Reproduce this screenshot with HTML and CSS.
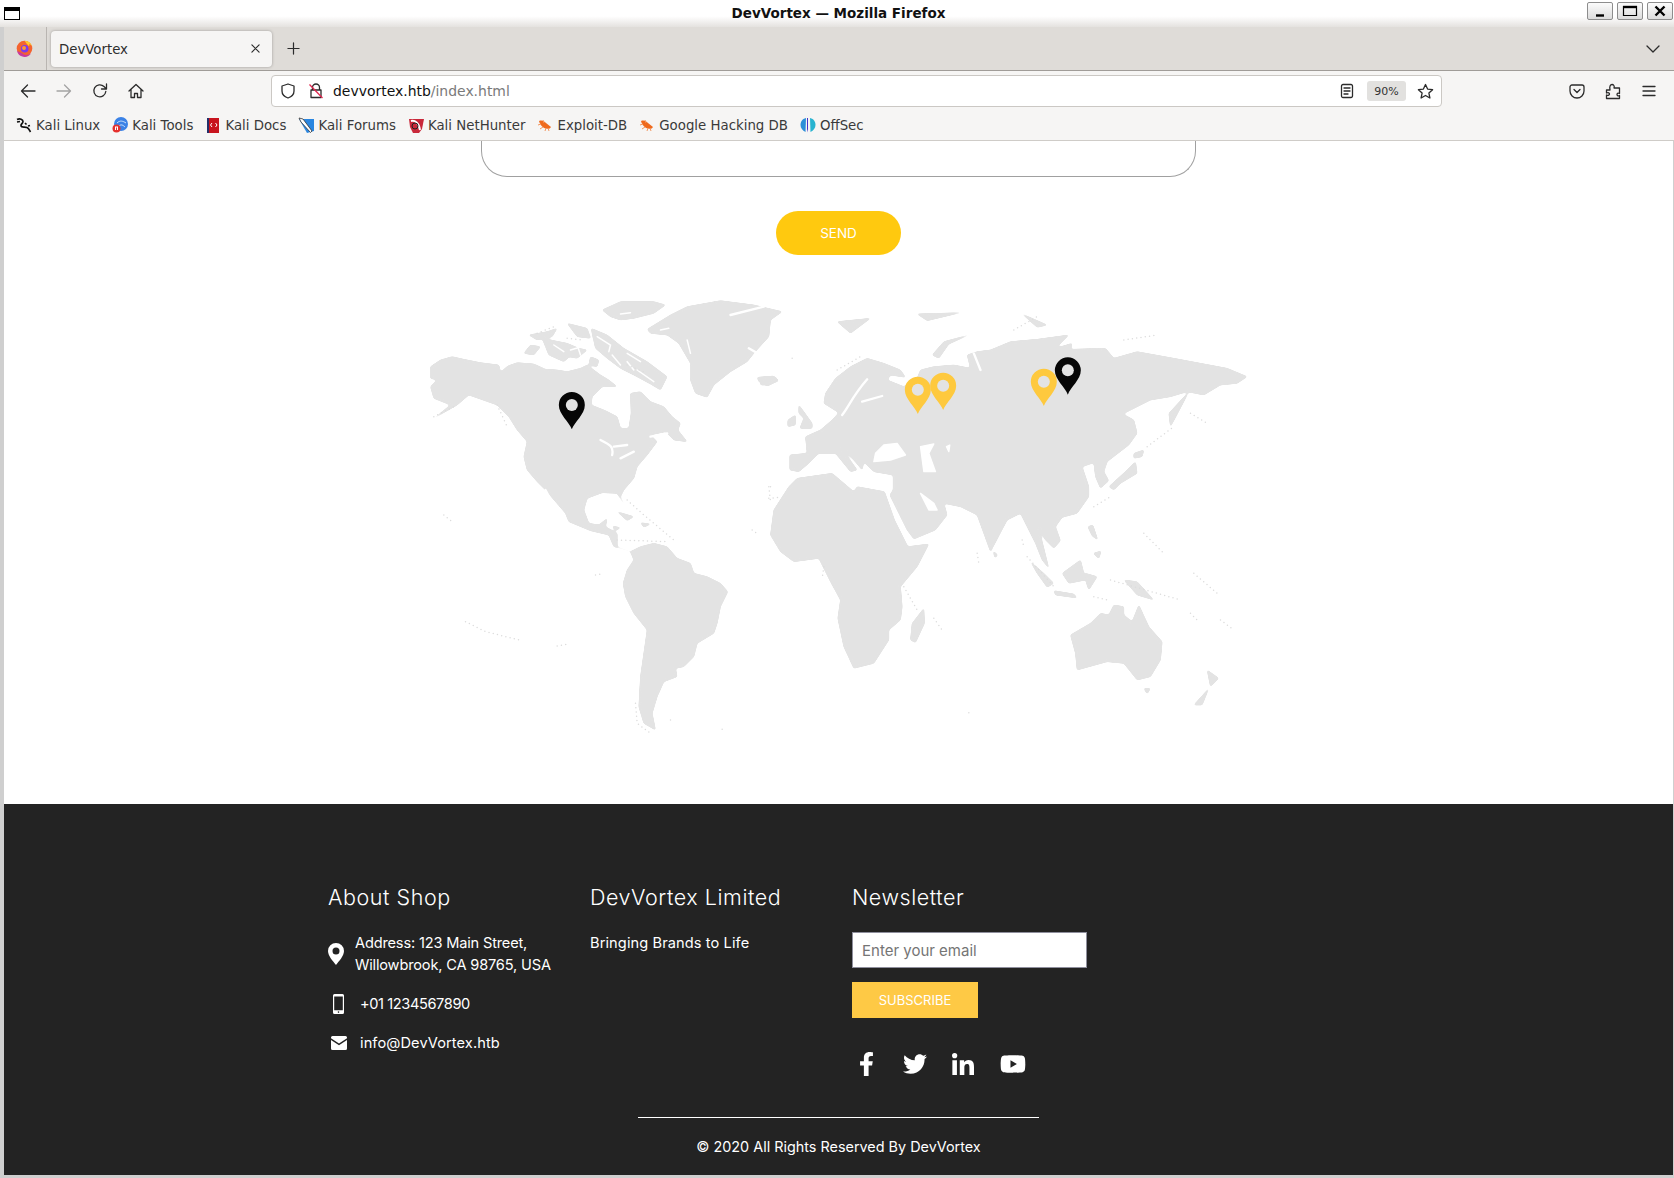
FILE: index.html
```html
<!DOCTYPE html>
<html lang="en">
<head>
<meta charset="utf-8">
<title>DevVortex</title>
<link rel="stylesheet" href="styles.css">
</head>
<body>
<div class="window">
  <header class="titlebar">
    <span class="win-icon"></span>
    <span class="win-title">DevVortex — Mozilla Firefox</span>
    <div class="win-buttons">
      <span class="win-btn"><svg width="14" height="12" viewBox="0 0 14 12"><path d="M3 10.500h8" class="wb"/></svg></span>
      <span class="win-btn"><svg width="16" height="12" viewBox="0 0 16 12"><path d="M1.500 1.500h13v9h-13z" class="wbt"/><path d="M1 2h14" class="wb"/></svg></span>
      <span class="win-btn"><svg width="14" height="12" viewBox="0 0 14 12"><path d="M2.500 1.500l9 9M11.500 1.500l-9 9" class="wb"/></svg></span>
    </div>
  </header>

  <div class="tabbar">
    <div class="ff-cell">
      <svg width="17" height="17" viewBox="0 0 17 17"><circle cx="8.500" cy="8.500" r="7.800" fill="#f4632f"/><path d="M8.500 .7a7.800 7.800 0 0 1 7.600 6c-1-1.700-2-2.500-3-3 .6 1 .4 2-.4 2.200C11.500 4.500 10 3 8.500.7z" fill="#ffcb2e"/><path d="M1 11a7.800 7.800 0 0 0 14 2.500c-3 2-7 2-9-.500z" fill="#c93a9c"/><circle cx="8.700" cy="8.700" r="3.800" fill="#7c3aed"/><circle cx="8" cy="8" r="2" fill="#ff9a2e"/></svg>
    </div>
    <div class="tab">
      <span class="tab-title">DevVortex</span>
      <svg class="tab-close" width="9" height="9" viewBox="0 0 10 10"><path d="M1 1l8 8M9 1l-8 8" class="ic"/></svg>
    </div>
    <svg class="new-tab" width="13" height="13" viewBox="0 0 14 14"><path d="M7 1v12M1 7h12" class="ic"/></svg>
    <svg class="tab-list" width="14" height="8" viewBox="0 0 14 8"><path d="M1 1l6 6 6-6" class="ic"/></svg>
  </div>

  <nav class="toolbar">
    <span class="tool"><svg width="16" height="16" viewBox="0 0 16 16"><path d="M15 8H1.500M7.500 2l-6 6 6 6" class="ic"/></svg></span>
    <span class="tool dim"><svg width="16" height="16" viewBox="0 0 16 16"><path d="M1 8h13.500M8.500 2l6 6-6 6" class="ic"/></svg></span>
    <span class="tool"><svg width="16" height="16" viewBox="0 0 16 16"><path d="M13.800 8.500A6 6 0 1 1 12 3.500L14.500 6M14.500 1v5h-5" class="ic"/></svg></span>
    <span class="tool"><svg width="16" height="16" viewBox="0 0 16 16"><path d="M1 8l7-6.500L15 8M3 6.500V14.500h3.500v-4h3v4H13V6.500" class="ic"/></svg></span>
    <div class="urlbar">
      <svg class="shield" width="16" height="16" viewBox="0 0 16 16"><path d="M8 1l6 2v5c0 3.500-3 6-6 7-3-1-6-3.500-6-7V3z" class="ic"/></svg>
      <svg class="lock" width="16" height="16" viewBox="0 0 16 16"><path d="M4.500 7V4.500a3.500 3.500 0 0 1 7 0V7M3 7h10v7.500H3z" class="ic"/><path d="M1.500 1.500l13 13.500" stroke="#e22850" stroke-width="1.300" fill="none"/></svg>
      <span class="url"><span class="url-host">devvortex.htb</span>/index.html</span>
      <svg class="reader" width="14" height="16" viewBox="0 0 14 16"><path d="M3 1.500h8A1.500 1.500 0 0 1 12.500 3v10a1.500 1.500 0 0 1-1.500 1.500H3A1.500 1.500 0 0 1 1.500 13V3A1.500 1.500 0 0 1 3 1.500zM4 5h6M4 8h6M4 11h4" class="ic"/></svg>
      <span class="zoom-badge">90%</span>
      <svg class="star" width="17" height="17" viewBox="0 0 17 17"><path d="M8.500 1.500l2.100 4.600 5 .6-3.700 3.400 1 4.900-4.400-2.500L4.100 15l1-4.900L1.400 6.700l5-.6z" class="ic"/></svg>
    </div>
    <div class="tools-right">
      <span class="tool"><svg width="16" height="16" viewBox="0 0 16 16"><path d="M3 2h10a2 2 0 0 1 2 2v4a7 7 0 0 1-14 0V4a2 2 0 0 1 2-2zM5 6.500l3 3 3-3" class="ic"/></svg></span>
      <span class="tool"><svg width="16" height="17" viewBox="0 0 16 17"><path d="M1.500 7h3.500c-.8-4 .5-5.500 2-5.500S9.800 3 9 5h5.500v5.500c-1.800-.8-2.500 0-2.500 1s.8 1.800 2.500 1V15.500H1.500v-3.500c2 .8 3 0 3-1s-1-1.800-3-1z" class="ic"/></svg></span>
      <span class="tool"><svg width="14" height="12" viewBox="0 0 14 12"><path d="M1 1.500h12M1 6h12M1 10.500h12" class="ic"/></svg></span>
    </div>
  </nav>

  <div class="bookmarks">
    <a class="bm"><svg width="16" height="16" viewBox="0 0 16 16"><path d="M1 2.500C4 1 7 2.500 7 4.500 7 6.500 4.500 7 5 9c.5 2 4 .5 6 1.500 2 1 2.500 3 3.500 4.500M1 5l3-.5M9 6l1.500 1.500M12 9l2-.5" fill="none" stroke="#111" stroke-width="1.700"/></svg>Kali Linux</a>
    <a class="bm"><svg width="16" height="16" viewBox="0 0 16 16"><circle cx="9" cy="7" r="7" fill="#3b82e6"/><path d="M5 6c3-3 6-2 9 0M7 9c2-2 4-1 6 1" stroke="#cfe3fb" fill="none"/><circle cx="4.500" cy="11.500" r="4" fill="#e5302d"/><path d="M3 10h3M3.500 10v3M5.500 10v3" stroke="#fff"/></svg>Kali Tools</a>
    <a class="bm"><svg width="16" height="16" viewBox="0 0 16 16"><path d="M2 1h12v15H2z" fill="#c8141e"/><path d="M2 1h2v15H2z" fill="#24306a"/><path d="M7 6L5.500 8 7 10M10.500 6L12 8l-1.500 2" stroke="#fff" fill="none"/></svg>Kali Docs</a>
    <a class="bm"><svg width="16" height="16" viewBox="0 0 16 16"><path d="M1 2h15v12L9 16z" fill="#2a86e0"/><path d="M1 1l4 1 9 12-1.500 1.500L3 5z" fill="#fff" stroke="#333" stroke-width=".8"/></svg>Kali Forums</a>
    <a class="bm"><svg width="16" height="16" viewBox="0 0 16 16"><path d="M1 2h15l-2 10-3 4H5L2 10z" fill="#c9283a"/><path d="M3 4c4-1 8 2 9 9" stroke="#fff" stroke-width="2" fill="none"/><circle cx="7" cy="9" r="3" fill="none" stroke="#222"/></svg>Kali NetHunter</a>
    <a class="bm"><svg width="16" height="16" viewBox="0 0 16 16"><path d="M2 4c3-1 5 0 7 2l5 4c-1 2-3 2-5 1.500C6 11 3 8 2 4z" fill="#ef6a1d"/><path d="M1 8l3-1M3 12l3-2M8 14l1-3M12 14l-1-3M6 3l1 3" stroke="#f3975f" fill="none"/></svg>Exploit-DB</a>
    <a class="bm"><svg width="16" height="16" viewBox="0 0 16 16"><path d="M2 4c3-1 5 0 7 2l5 4c-1 2-3 2-5 1.500C6 11 3 8 2 4z" fill="#ef6a1d"/><path d="M1 8l3-1M3 12l3-2M8 14l1-3M12 14l-1-3M6 3l1 3" stroke="#f3975f" fill="none"/></svg>Google Hacking DB</a>
    <a class="bm"><svg width="16" height="16" viewBox="0 0 16 16"><path d="M6 1C2 2 .5 5 .5 8s2 5.500 5 7z" fill="#2d8fd8"/><path d="M10 1c4 1 5.500 4 5.500 7s-2 5.500-5 7z" fill="#27b3d0"/><path d="M8 1v11l-.7 3.500L7 12V1z" fill="#4a32c8"/></svg>OffSec</a>
  </div>

  <div class="page">
    <main class="content">
      <div class="textarea-tail"></div>
      <button class="send">SEND</button>
      <svg class="map" width="840" height="460" viewBox="418.500 285 840 460" role="img" aria-label="World map">
        <defs>
          <filter id="soft" x="-5%" y="-5%" width="110%" height="110%"><feGaussianBlur stdDeviation="3.500"/><feComponentTransfer><feFuncA type="linear" slope="5" intercept="-2"/></feComponentTransfer></filter>
          <g id="pin"><path d="M0 0C-8-22-39-45-39-73A39 39 0 0 1 39-73C39-45 8-22 0 0Z"/><circle cx="0" cy="-73" r="18" fill="#e3e3e3"/></g>
        </defs>
        <g transform="translate(420 290) scale(.33333)">
          <g class="land" filter="url(#soft)">
            <path d="M30 230L60 210 95 200 130 208 180 218 235 225 240 247 262 228 290 218 340 222 375 238 410 240 440 245 480 235 500 225 540 255 565 270 590 290 545 290 515 320 512 345 555 362 590 380 600 415 625 415 632 370 630 310 660 305 690 335 730 350 755 380 780 400 772 420 800 455 760 450 735 425 690 435 710 455 680 495 650 530 640 565 610 600 600 620 612 645 590 610 545 608 500 625 490 660 505 700 535 705 560 685 555 710 590 730 590 770 630 785 600 775 580 770 565 735 510 722 445 695 435 670 375 600 350 575 320 540 310 500 320 455 290 420 265 380 230 345 145 315 110 345 40 385 90 345 40 325 30 290 50 270 30 265Z"/>
            <path d="M630 785L660 770 700 760 740 770 770 805 810 820 820 850 860 860 900 880 922 905 900 950 890 1000 880 1030 830 1060 820 1100 790 1130 765 1135 770 1160 730 1175 710 1220 695 1270 705 1320 670 1300 655 1250 660 1160 680 1020 640 970 615 920 608 880 620 840 640 810Z"/>
            <path d="M680 118L750 75 800 50 900 32 1000 45 1085 65 1050 90 1045 140 1000 190 980 215 930 245 880 285 860 322 825 310 810 270 810 220 775 160 740 135 690 130Z"/>
            <path d="M545 60L600 35 700 35 735 45 700 70 640 85 600 90 570 80Z"/>
            <path d="M1010 262L1060 258 1075 272 1040 288 1015 275Z"/>
            <path d="M310 190L330 165 360 170 340 195Z"/>
            <path d="M325 135L380 125 410 115 395 140 350 150Z"/>
            <path d="M365 145L440 160 475 175 430 215 385 195Z"/>
            <path d="M450 170L500 180 470 205 445 200Z"/>
            <path d="M512 115L560 135 610 175 680 215 740 260 720 300 690 282 640 255 600 235 560 205 525 175Z"/>
            <path d="M440 100L500 115 510 145 470 140Z"/>
            <path d="M510 200L535 210 530 230 505 225Z"/>
            <path d="M590 665L640 680 620 692Z"/>
            <path d="M660 698L690 702 670 712Z"/>
            <path d="M575 708L600 713 585 722Z"/>
          </g>
          <path class="cut" d="M375 600L410 665M540 450C570 465 580 470 575 495M600 505L640 485M580 470L620 465M690 440L740 430M930 75L1030 50M985 175L1020 195"/>
          <path class="cut thin" d="M600 72L630 68M555 105L610 120M450 180L500 165M530 140L570 165 565 185M575 195L600 225M620 190L660 215M650 240L700 275M620 215L640 240M400 165L430 185M470 165L480 195M720 120L745 115M800 150L810 190"/>
          <path class="dots" d="M40 380L100 350M230 345L260 410M70 675L95 695M135 995L195 1025 305 1052M410 1068L445 1062M525 855L550 850M620 630L670 675 760 750M590 750L740 755M1045 625L1075 622M995 720L1015 735M1050 590L1055 600M645 1240L650 1300 690 1330M750 1290L760 1295M905 1318L915 1320M1115 205L1125 210M350 130L400 110M440 145L490 150M620 225L680 250"/>
        </g>
        <g transform="translate(760 290) scale(.33333)">
          <g class="land" filter="url(#soft)">
            <path d="M30 735L40 660 85 590 110 565 215 550 280 605 290 590 372 605 402 690 442 770 505 762 470 830 420 890 425 950 420 990 385 1020 385 1050 340 1120 280 1135 250 1070 232 985 240 930 210 875 175 805 100 815 60 785Z"/>
            <path d="M88 495L140 490 135 440 180 420 215 390 235 368 190 340 195 310 225 265 270 230 320 205 370 220 420 240 435 262 390 255 380 270 430 290 470 265 480 240 520 230 580 225 630 235 620 195 650 185 690 180 750 155 830 148 925 135 885 175 935 160 930 178 1035 175 1060 205 1130 185 1240 205 1320 220 1400 235 1460 260 1430 280 1380 285 1330 315 1280 305 1230 320 1170 330 1087 372 1120 390 1130 430 1105 465 1040 515 1030 545 1045 572 1020 595 1005 560 1000 518 965 530 985 590 985 620 950 670 905 682 885 710 900 752 880 775 855 750 835 715 865 835 845 810 825 760 805 720 780 670 740 690 690 785 650 675 600 650 550 640 560 675 525 720 460 747 440 720 388 615 398 600 398 555 340 545 310 515 305 540 280 510 240 470 290 540 270 545 225 490 175 490 145 520 115 545 88 540Z"/>
            <path d="M490 955L492 1000 465 1058 450 1050 455 1000Z"/>
            <path d="M1045 590L1100 540 1125 515 1130 550 1080 580 1060 600Z"/>
            <path d="M1120 490L1150 480 1145 500 1120 505Z"/>
            <path d="M1230 410L1225 370 1285 305 1262 350Z"/>
            <path d="M905 850L960 810 975 870 925 880Z"/>
            <path d="M810 815L850 850 880 880 860 892 830 850Z"/>
            <path d="M880 902L940 912 950 924 885 915Z"/>
            <path d="M1090 870L1130 875 1180 930 1130 915Z"/>
            <path d="M982 710L997 705 1012 750 995 738Z"/>
            <path d="M998 790L1022 783 1015 806Z"/>
            <path d="M975 850L1010 860 985 900 978 880Z"/>
            <path d="M930 1035L990 1000 1020 970 1045 975 1060 945 1090 950 1090 975 1115 995 1135 945 1165 1010 1205 1055 1200 1110 1170 1160 1130 1170 1090 1120 1040 1115 950 1140 945 1090Z"/>
            <path d="M1150 1195L1170 1195 1160 1212Z"/>
            <path d="M1340 1140L1375 1165 1350 1190Z"/>
            <path d="M1345 1195L1300 1245 1325 1245Z"/>
            <path d="M698 783L712 795 703 804Z"/>
            <path d="M515 195L550 155 625 135 565 162 535 205Z"/>
            <path d="M230 95L330 85 270 130Z"/>
            <path d="M470 72L600 68 500 92Z"/>
            <path d="M785 72L860 105 830 112Z"/>
            <path d="M115 345L130 365 155 400 155 415 118 415 130 385 115 370Z"/>
            <path d="M82 390L105 375 105 405 82 410Z"/>
            <path d="M0 265L50 262 30 285 0 285Z"/>
          </g>
          <path class="lake" d="M480 470L520 462 505 490 525 545 490 545Z"/>
          <path class="lake" d="M345 490L370 465 410 460 435 495 390 510 340 515Z"/>
          <path class="lake" d="M480 610L520 640 530 660 505 660Z"/>
          <path class="lake" d="M558 470L568 465 565 485Z"/>
          <path class="cut" d="M245 375C265 350 275 320 320 268M365 318L305 335M640 190L660 240M1135 395L1135 450"/>
          <path class="dots" d="M25 590L30 635M650 790L655 820M785 750L790 770M800 800L880 890M1000 650L1050 620M1160 470L1240 410M1290 370L1340 400M1150 730L1210 790M1300 850L1370 910M1050 870L1260 930M1290 970L1310 990M1380 990L1420 1020M430 890L470 960M520 985L545 1020M190 830L185 865M625 1268L630 1270M1000 920L1040 930M760 120L830 80M230 240L300 200M1090 150L1190 135"/>
          <use href="#pin" x="472" y="372" class="pin-gold"/>
          <use href="#pin" x="548" y="360" class="pin-gold"/>
          <use href="#pin" x="850" y="348" class="pin-gold"/>
          <use href="#pin" x="922" y="314" class="pin-dark"/>
        </g>
        <g transform="translate(420 290) scale(.33333)"><use href="#pin" x="454" y="418" class="pin-dark"/></g>
      </svg>
    </main>

    <footer class="footer">
      <div class="footer-cols">
        <section class="col">
          <h3 class="col-title">About Shop</h3>
          <div class="contact contact-address">
            <svg class="ci-pin" width="16" height="22" viewBox="0 0 16 22"><path fill-rule="evenodd" d="M8 0a8 8 0 0 1 8 8c0 5-5 10-8 14C5 18 0 13 0 8a8 8 0 0 1 8-8zm0 4.500a3.500 3.500 0 1 0 0 7 3.500 3.500 0 0 0 0-7z" fill="#fff"/></svg>
            <p class="contact-text tight">Address: 123 Main Street,<br>Willowbrook, CA 98765, USA</p>
          </div>
          <div class="contact contact-phone">
            <span class="ci-box"><svg width="11" height="20" viewBox="0 0 11 20"><path fill-rule="evenodd" d="M1.500 0h8A1.500 1.500 0 0 1 11 1.500v17A1.500 1.500 0 0 1 9.500 20h-8A1.500 1.500 0 0 1 0 18.500v-17A1.500 1.500 0 0 1 1.500 0zM1.200 2.500v13.800h8.600V2.500zM5.500 17.300a.8.8 0 1 0 0 1.600.8.8 0 0 0 0-1.600z" fill="#fff"/></svg></span>
            <span class="contact-text digits">+01 1234567890</span>
          </div>
          <div class="contact contact-mail">
            <span class="ci-box"><svg width="16" height="14" viewBox="0 0 16 14"><path d="M0 1.500A1.500 1.500 0 0 1 1.500 0h13A1.500 1.500 0 0 1 16 1.500v.7L8 7.500 0 2.200z" fill="#fff"/><path d="M0 4l8 5.300L16 4v8.500a1.500 1.500 0 0 1-1.500 1.500h-13A1.500 1.500 0 0 1 0 12.500z" fill="#fff"/></svg></span>
            <span class="contact-text">info@DevVortex.htb</span>
          </div>
        </section>
        <section class="col">
          <h3 class="col-title">DevVortex Limited</h3>
          <p class="contact-text about-line">Bringing Brands to Life</p>
        </section>
        <section class="col">
          <h3 class="col-title">Newsletter</h3>
          <input class="email" type="text" placeholder="Enter your email">
          <button class="subscribe">SUBSCRIBE</button>
          <div class="social">
            <svg width="15" height="26" viewBox="0 0 320 512"><path fill="#fff" d="M279.14 288l14.22-92.66h-88.91v-60.13c0-25.35 12.42-50.06 52.24-50.06h40.42V6.26S260.43 0 225.36 0c-73.22 0-121.08 44.38-121.08 124.72v70.62H22.89V288h81.39v224h100.17V288z"/></svg>
            <svg width="24" height="24" viewBox="0 0 512 512"><path fill="#fff" d="M459.37 151.716c.325 4.548.325 9.097.325 13.645 0 138.72-105.583 298.558-298.558 298.558-59.452 0-114.68-17.219-161.137-47.106 8.447.974 16.568 1.299 25.34 1.299 49.055 0 94.213-16.568 130.274-44.832-46.132-.975-84.792-31.188-98.112-72.772 6.498.974 12.995 1.624 19.818 1.624 9.421 0 18.843-1.3 27.614-3.573-48.081-9.747-84.143-51.98-84.143-102.985v-1.299c13.969 7.797 30.214 12.67 47.431 13.319-28.264-18.843-46.781-51.005-46.781-87.391 0-19.492 5.197-37.36 14.294-52.954 51.655 63.675 129.3 105.258 216.365 109.807-1.624-7.797-2.599-15.918-2.599-24.04 0-57.828 46.782-104.934 104.934-104.934 30.213 0 57.502 12.67 76.67 33.137 23.715-4.548 46.456-13.32 66.599-25.34-7.798 24.366-24.366 44.833-46.132 57.827 21.117-2.273 41.584-8.122 60.426-16.243-14.292 20.791-32.161 39.308-52.628 54.253z"/></svg>
            <svg width="24" height="22" viewBox="0 0 448 448"><path fill="#fff" d="M100.28 448H7.4V148.9h92.88zM53.79 108.1C24.09 108.1 0 83.5 0 53.8a53.79 53.79 0 0 1 107.58 0c0 29.7-24.1 54.3-53.79 54.3zM447.9 448h-92.68V302.4c0-34.7-.7-79.2-48.29-79.2-48.29 0-55.69 37.7-55.69 76.7V448h-92.78V148.9h89.08v40.8h1.3c12.4-23.5 42.69-48.3 87.88-48.3 94 0 111.28 61.9 111.28 142.3V448z"/></svg>
            <svg width="26" height="24" viewBox="0 0 576 512"><path fill="#fff" d="M549.655 124.083c-6.281-23.65-24.787-42.276-48.284-48.597C458.781 64 288 64 288 64S117.22 64 74.629 75.486c-23.497 6.322-42.003 24.947-48.284 48.597-11.412 42.867-11.412 132.305-11.412 132.305s0 89.438 11.412 132.305c6.281 23.65 24.787 41.5 48.284 47.821C117.22 448 288 448 288 448s170.78 0 213.371-11.486c23.497-6.321 42.003-24.171 48.284-47.821 11.412-42.867 11.412-132.305 11.412-132.305s0-89.438-11.412-132.305zm-317.51 213.508V175.185l142.739 81.205-142.739 81.201z"/></svg>
          </div>
        </section>
      </div>
      <div class="copyright">
        <p class="copyright-text">© 2020 All Rights Reserved By DevVortex</p>
      </div>
    </footer>
  </div>
</div>
</body>
</html>
```

FILE: styles.css
```css
* { box-sizing: border-box; }
html, body { margin: 0; padding: 0; }
body { width: 1674px; height: 1178px; overflow: hidden; font-family: "DejaVu Sans", sans-serif; background: #cfcfcf; }
.window { display: flex; flex-direction: column; height: 1178px; }

.ic { fill: none; stroke: #2b2b2b; stroke-width: 1.300; stroke-linejoin: round; stroke-linecap: round; }
.wb { fill: none; stroke: #000; stroke-width: 2.400; }
.wbt { fill: none; stroke: #000; stroke-width: 1.200; }

.titlebar { position: relative; flex: none; height: 27px; display: flex; align-items: center; padding: 0 1px 0 4px; background: linear-gradient(#fff 0, #fff 60%, #e4e2df 100%); }
.win-icon { width: 16px; height: 13px; border: 1.500px solid #000; border-top-width: 4px; margin-top: -1px; background: #fff; }
.win-title { flex: 1; text-align: center; font-size: 13.500px; font-weight: 700; color: #111; margin-top: -2px; margin-left: 70px; }
.win-buttons { display: flex; gap: 4px; margin-top: -1px; margin-bottom: 4px; }
.win-btn { width: 26px; height: 18px; display: flex; align-items: center; justify-content: center; border: 1px solid #8d8d8d; border-radius: 2px; background: linear-gradient(#fbfbfb, #dcdcdc); }

.tabbar { flex: none; height: 44px; display: flex; align-items: center; margin-left: 4px; background: #dfdcd8; border-bottom: 1px solid #a09c98; }
.ff-cell { width: 43px; height: 43px; display: flex; align-items: center; justify-content: center; border-right: 1px solid #b9b5b1; padding-right: 2px; }
.tab { width: 221px; height: 36px; margin-left: 4px; padding: 0 12px 0 8px; display: flex; align-items: center; justify-content: space-between; background: #f6f5f4; border-radius: 4px; box-shadow: 0 0 3px rgba(0,0,0,.3); }
.tab-title { font-size: 13.300px; color: #2e2e2e; padding-top: 2px; }
.new-tab { margin-left: 15px; }
.tab-list { margin-left: auto; margin-right: 14px; }

.toolbar { flex: none; height: 40px; display: flex; align-items: center; margin-left: 4px; padding-left: 6px; padding-right: 7px; background: #f6f5f4; }
.tool { width: 36px; height: 32px; display: flex; align-items: center; justify-content: center; flex: none; }
.tool.dim { opacity: .4; }
.urlbar { width: 1171px; height: 32px; margin-left: 117px; padding: 0 7px 0 8px; display: flex; align-items: center; background: #fff; border: 1px solid #cbc8c4; border-radius: 4px; flex: none; }
.lock { margin-left: 12px; }
.url { margin-left: 9px; font-size: 13.950px; color: #7a7a7a; flex: 1; }
.url-host { color: #111; }
.reader { margin-right: 13px; }
.zoom-badge { width: 39px; height: 20px; border-radius: 3px; background: #e2e1df; font-size: 11px; color: #333; display: flex; align-items: center; justify-content: center; margin-right: 11px; }
.tools-right { margin-left: auto; display: flex; }

.bookmarks { flex: none; height: 30px; display: flex; align-items: center; gap: 12px; margin-left: 4px; padding-left: 12px; padding-bottom: 1px; background: #f6f5f4; border-bottom: 1px solid #cfccc8; }
.bm { display: flex; align-items: center; gap: 4px; font-size: 13.330px; color: #3a3a3a; white-space: nowrap; }

.page { flex: none; height: 1034px; margin-left: 4px; margin-right: 1px; display: flex; flex-direction: column; background: #fff; }
.content { display: flex; flex-direction: column; align-items: center; flex: none; height: 663px; }
.textarea-tail { width: 715px; height: 36px; border: 1px solid #a0a0a0; border-top: 0; border-radius: 0 0 26px 26px; flex: none; }
.send { width: 125px; height: 44px; margin-top: 34px; border: 0; border-radius: 22px; background: #ffc90f; color: #fff; font-family: Inter, sans-serif; font-size: 13.500px; font-weight: 400; flex: none; }
.map { margin-top: 30px; display: block; flex: none; }
.land { fill: #e3e3e3; stroke: #e3e3e3; stroke-width: 3; stroke-linejoin: round; }
.cut { fill: none; stroke: #fff; stroke-width: 7; stroke-linecap: round; }
.cut.thin { stroke-width: 4.500; }
.lake { fill: #fff; stroke: #fff; stroke-width: 4; stroke-linejoin: round; }
.dots { fill: none; stroke: #dcdcdc; stroke-width: 4.500; stroke-linecap: round; stroke-dasharray: 0 13; }
.pin-dark { fill: #060606; }
.pin-gold { fill: #fec93e; }

.footer { flex: 1; background: #232323; color: #fff; font-family: Inter, sans-serif; }
.footer-cols { display: flex; padding: 79px 0 0 324px; height: 313px; }
.col { width: 262px; flex: none; }
.col-title { margin: 0; font-size: 21.500px; line-height: 28px; font-weight: 300; letter-spacing: .55px; }
.contact { display: flex; align-items: center; }
.contact-address { margin-top: 21px; }
.contact-phone { margin-top: 17px; }
.contact-mail { margin-top: 17px; }
.ci-pin { flex: none; margin-right: 11px; }
.ci-box { width: 21px; margin-right: 11px; display: flex; justify-content: center; flex: none; }
.contact-text { margin: 0; font-size: 14.600px; line-height: 22px; font-weight: 400; letter-spacing: .1px; }
.contact-text.tight { letter-spacing: -.17px; }
.contact-text.digits { letter-spacing: -.4px; }
.about-line { margin-top: 21px; }
.email { display: block; width: 235px; height: 36px; margin-top: 21px; padding: 0 9px; border: 1px solid #8f8f9d; border-radius: 0; background: #fff; font-family: Inter, sans-serif; font-size: 15px; font-weight: 400; }
.email::placeholder { color: #757575; opacity: 1; }
.subscribe { display: block; width: 126px; height: 36px; margin-top: 14px; border: 0; background: #fec945; color: #fff; font-family: Inter, sans-serif; font-size: 13px; font-weight: 400; }
.social { display: grid; grid-template-columns: 50px 47px 50px 50px; justify-items: center; align-items: center; margin-top: 33px; margin-left: -11px; }

.copyright { width: 401px; margin: 0 auto; border-top: 1px solid #fff; padding-top: 18px; text-align: center; }
.copyright-text { margin: 0; font-size: 14.400px; line-height: 22px; font-weight: 400; }
```
